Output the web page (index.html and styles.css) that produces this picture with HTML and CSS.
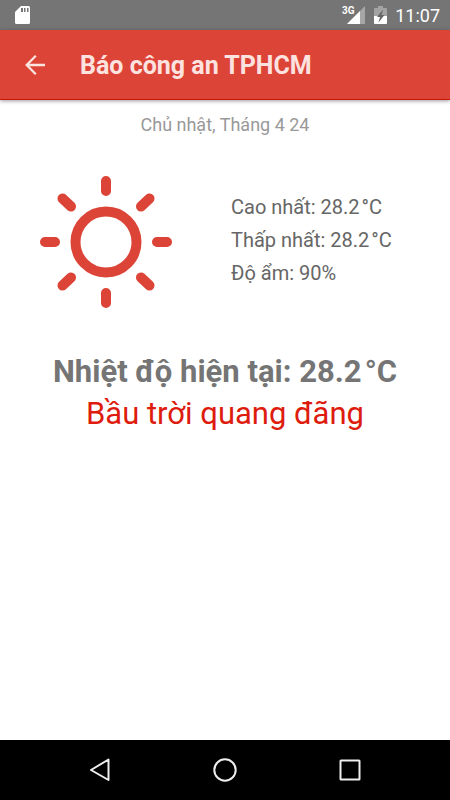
FILE: index.html
```html
<!DOCTYPE html>
<html lang="vi">
<head>
<meta charset="utf-8">
<meta name="viewport" content="width=device-width, initial-scale=1">
<title>Báo công an TPHCM</title>
<link rel="stylesheet" href="styles.css">
</head>
<body>
<div class="status">
  <svg class="sd" width="16" height="20" viewBox="0 0 16 20" aria-hidden="true">
    <path fill="#fff" d="M6 1H13.500Q15 1 15 2.500V17.500Q15 19 13.500 19H1.500Q0 19 0 17.500V7Z"/>
    <path fill="#757575" d="M6 3h2v4H6zM9 3h1.500v4H9zM12 3h1.500v4H12z"/>
  </svg>
  <div class="signals">
    <svg width="24" height="20" viewBox="0 0 24 20" role="img" aria-label="3G">
      <path fill="#a6a6a6" d="M23 1V19H5Z"/>
      <path fill="#fff" d="M18 6V19H5Z"/>
      <text class="network" x="0" y="9">3G</text>
    </svg>
    <svg width="13" height="20" viewBox="0 0 13 20" role="img" aria-label="Pin">
      <path fill="#a3a3a3" d="M4 1h5v2h3q1 0 1 1v7H0V4q0-1 1-1h3z"/>
      <path fill="#fff" d="M0 11h13v7q0 1-1 1H1q-1 0-1-1z"/>
      <path fill="#666" d="M9 4.500 3 12H6L4.500 17.500 10.500 10H7.500z"/>
    </svg>
    <time class="clock">11:07</time>
  </div>
</div>
<header class="bar">
  <button class="back" type="button" aria-label="Quay lại">
    <svg width="20" height="20" viewBox="0 0 20 20"><path fill="none" stroke="#fce3e0" stroke-width="2.300" d="M20 10H2M10.800 .8 1.700 10l9.100 9.200"/></svg>
  </button>
  <h1 class="title">Báo công an TPHCM</h1>
</header>
<main class="content">
  <p class="date">Chủ nhật, Tháng 4 24</p>
  <section class="weather">
    <svg class="sun" width="134" height="134" viewBox="-67 -67 134 134" aria-hidden="true">
      <g fill="none" stroke="#dc4437" stroke-width="10" stroke-linecap="round">
        <circle r="30.500"/>
        <path d="M0-61V-51M0 61V51M-61 0H-51M61 0H51M-43.500-43.500l8.500 8M43.500-43.500l-8.500 8M-43.500 43.500l8.500-8M43.500 43.500l-8.500-8"/>
      </g>
    </svg>
    <ul class="details">
      <li>Cao nhất: 28.2&#8202;°C</li>
      <li>Thấp nhất: 28.2&#8202;°C</li>
      <li>Độ ẩm: 90%</li>
    </ul>
  </section>
  <p class="current">Nhiệt độ hiện tại: 28.2&#8202;°C</p>
  <p class="sky">Bầu trời quang đãng</p>
</main>
<nav class="nav">
  <button type="button" aria-label="Trở về"><svg width="24" height="24" viewBox="0 0 24 24"><path d="M20.500 1.500V22L3 12Z"/></svg></button>
  <button type="button" aria-label="Màn hình chính"><svg width="24" height="24" viewBox="0 0 24 24"><circle cx="12" cy="12" r="10.700"/></svg></button>
  <button type="button" aria-label="Ứng dụng gần đây"><svg width="24" height="24" viewBox="0 0 24 24"><rect x="2.500" y="2.500" width="19" height="19" rx=".5"/></svg></button>
</nav>
</body>
</html>
```
FILE: styles.css
```css
* { box-sizing: border-box; }
body {
  margin: 0;
  min-height: 100vh;
  display: flex;
  flex-direction: column;
  background: #fff;
  color: #757575;
  font-family: Roboto, sans-serif;
}
button {
  padding: 0;
  border: 0;
  background: none;
  display: flex;
  align-items: center;
  justify-content: center;
}
p, h1, ul { margin: 0; padding: 0; }
.status {
  height: 30px;
  padding: 0 10px 0 15px;
  display: flex;
  align-items: center;
  justify-content: space-between;
  background: #757575;
}
.signals { display: flex; align-items: center; gap: 8px; }
.network { fill: #fff; font-size: 10px; font-weight: 700; }
.clock { color: #fff; font-size: 18px; line-height: 30px; font-weight: 400; margin-top: 2px; }
.bar {
  height: 70px;
  padding-left: 20px;
  display: flex;
  align-items: center;
  gap: 30px;
  background: #dc4437;
  border-bottom: 1px solid #c91406;
  box-shadow: 0 1px 4px rgba(0, 0, 0, .4);
}
.back { width: 30px; height: 48px; }
.title { padding-top: 2px; color: #fce3e0; font-size: 25px; line-height: 32px; font-weight: 700; }
.content { flex: 1; text-align: center; }
.date { padding-top: 13px; font-size: 18px; line-height: 24px; color: #999; }
.weather {
  display: grid;
  grid-template-columns: 212fr 238fr;
  align-items: center;
  padding-top: 38px;
}
.sun { justify-self: center; }
.details {
  list-style: none;
  padding: 0 0 4px 19px;
  text-align: left;
  font-size: 20px;
  line-height: 33px;
  color: #666;
}
.current { margin-top: 42px; font-size: 31px; line-height: 42px; font-weight: 700; }
.sky { font-size: 31px; line-height: 42px; color: #dd1c0e; }
.nav {
  height: 60px;
  display: flex;
  align-items: center;
  justify-content: center;
  gap: 77px;
  background: #000;
}
.nav button { width: 48px; height: 48px; }
.nav svg { fill: none; stroke: #eee; stroke-width: 2; stroke-linejoin: round; }
```
